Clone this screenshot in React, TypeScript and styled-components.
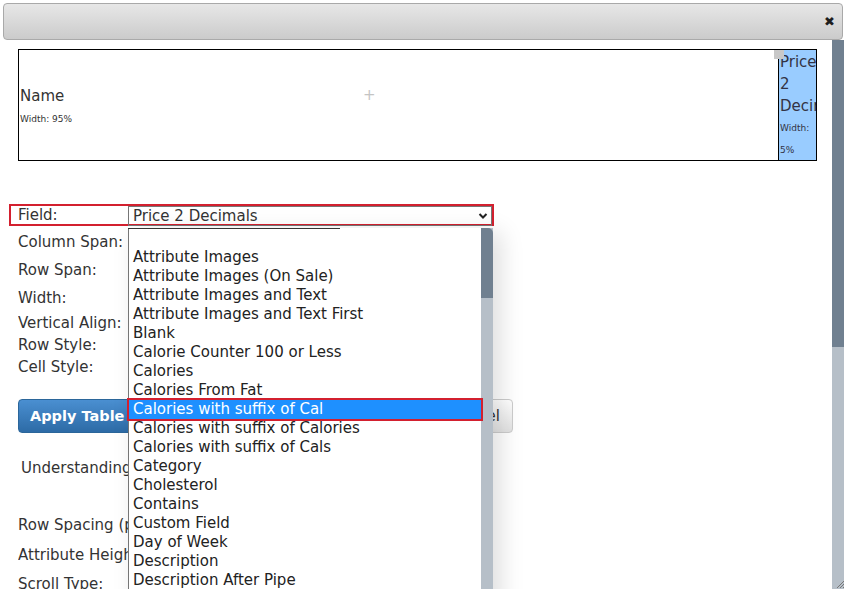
import styled, { createGlobalStyle } from "styled-components";

const GlobalStyle = createGlobalStyle`
  html, body {
    margin: 0;
    height: 100%;
    overflow: hidden;
    background: #fff;
  }
  body {
    font-family: "DejaVu Sans", Verdana, sans-serif;
    color: #333;
  }
  #root {
    height: 100%;
  }
`;

const Modal = styled.div`
  position: relative;
  height: 100%;
  padding: 3px 3px 0 3px;
  box-sizing: border-box;
  display: flex;
  flex-direction: column;
`;

const TitleBar = styled.div`
  height: 37px;
  box-sizing: border-box;
  margin-right: 1px;
  border: 1px solid #a9a9a9;
  border-radius: 4px;
  background: linear-gradient(#e7e7e7, #cbcbcb);
  display: flex;
  align-items: center;
  justify-content: flex-end;
  padding: 0 7px 0 0;
`;

const CloseButton = styled.span`
  font-size: 13px;
  font-weight: bold;
  color: #1e1e1e;
  line-height: 1;
`;

const Body = styled.div`
  flex: 1;
  display: flex;
  min-height: 0;
`;

const Content = styled.div`
  flex: 1;
  padding: 9px 15px 0 15px;
  font-size: 15px;
`;

const PageScrollbar = styled.div`
  width: 12px;
  background: #b6bfc8;
  display: flex;
  flex-direction: column;
`;

const ScrollThumb = styled.div<{ $h: number; $round?: boolean }>`
  height: ${(p) => p.$h}px;
  background: #708090;
  border-top-right-radius: ${(p) => (p.$round ? "5px" : "0")};
`;

const LayoutTable = styled.div`
  position: relative;
  display: flex;
  height: 112px;
  box-sizing: border-box;
  border: 1px solid #000;
`;

const NameCell = styled.div`
  position: relative;
  flex: 1;
  display: flex;
  flex-direction: column;
  justify-content: center;
  padding: 6px 0 0 1px;
  line-height: 23px;
  color: #333;
`;

const CellTitle = styled.div`
  font-size: 15px;
`;

const CellWidth = styled.div`
  font-size: 9px;
`;

const AddMark = styled.span`
  position: absolute;
  left: 344px;
  top: 34px;
  font-size: 15px;
  color: #c4c4c4;
`;

const PriceCell = styled.div`
  width: 38px;
  box-sizing: border-box;
  border-left: 1px solid #000;
  background: #99ccff;
  padding: 1px 0 0 1px;
  overflow: hidden;
  line-height: 22px;
  color: #334;
`;

const ResizeHandle = styled.span`
  position: absolute;
  left: 755px;
  top: 0;
  width: 10px;
  height: 9px;
  background: #c8c8c8;
  z-index: 1;
`;

const Form = styled.div`
  margin-top: 45px;
`;

const FieldRow = styled.div`
  position: relative;
  display: flex;
  align-items: center;
  width: 474px;
  height: 18px;
  margin-left: -7px;
  padding-left: 7px;
  outline: 2px solid #d3202f;
`;

const FormRow = styled.div<{ $gap: number }>`
  display: flex;
  align-items: center;
  height: 19px;
  margin-top: ${(p) => p.$gap}px;
`;

const Label = styled.span`
  width: 110px;
  flex: none;
  white-space: nowrap;
  overflow: hidden;
`;

const SelectWrap = styled.div`
  position: relative;
  flex: 1;
  align-self: flex-start;
`;

const SelectBox = styled.div`
  height: 20px;
  box-sizing: border-box;
  border: 1px solid #767676;
  padding: 0 0 0 4px;
  display: flex;
  align-items: center;
  justify-content: space-between;
  line-height: 18px;
  color: #333;
`;

const Chevron = styled.svg`
  width: 10px;
  height: 8px;
  margin-right: 3px;
`;

const Dropdown = styled.div`
  position: absolute;
  left: 0;
  top: 22px;
  width: 365px;
  height: 380px;
  box-sizing: border-box;
  border-left: 1px solid #767676;
  background: #fff;
  display: flex;
  box-shadow: 8px 4px 22px rgba(0, 0, 0, 0.13);
  z-index: 5;
  &::before {
    content: "";
    position: absolute;
    left: -1px;
    top: 0;
    width: 212px;
    height: 1px;
    background: #333;
  }
`;

const OptionList = styled.div`
  flex: 1;
  padding-top: 1px;
`;

const Option = styled.div<{ $active?: boolean }>`
  height: 19px;
  line-height: 19px;
  padding-left: 4px;
  font-size: 15px;
  white-space: nowrap;
  color: ${(p) => (p.$active ? "#fff" : "#222")};
  background: ${(p) => (p.$active ? "#1e90ff" : "transparent")};
  outline: ${(p) => (p.$active ? "2px solid #d3202f" : "none")};
  position: relative;
`;

const ListScrollbar = styled(PageScrollbar)`
  width: 12px;
`;

const ButtonRow = styled.div`
  display: flex;
  justify-content: space-between;
  width: 495px;
  margin-top: 23px;
`;

const Button = styled.button<{ $primary?: boolean }>`
  height: 34px;
  padding: 0 ${(p) => (p.$primary ? "11px" : "12px")};
  border-radius: 4px;
  font-family: inherit;
  font-size: ${(p) => (p.$primary ? "14.5px" : "15px")};
  font-weight: ${(p) => (p.$primary ? "bold" : "normal")};
  color: ${(p) => (p.$primary ? "#fff" : "#333")};
  border: 1px solid ${(p) => (p.$primary ? "#2b669a" : "#ccc")};
  background: ${(p) =>
    p.$primary
      ? "linear-gradient(#4a8fd1, #2d6ba6)"
      : "linear-gradient(#ffffff, #e2e2e2)"};
`;

const HelpText = styled.div`
  margin: 26px 0 0 3px;
  height: 19px;
  line-height: 19px;
`;

const ResizeGrip = styled.svg`
  position: absolute;
  right: 2px;
  bottom: 0;
  width: 10px;
  height: 10px;
`;

const options = [
  "",
  "Attribute Images",
  "Attribute Images (On Sale)",
  "Attribute Images and Text",
  "Attribute Images and Text First",
  "Blank",
  "Calorie Counter 100 or Less",
  "Calories",
  "Calories From Fat",
  "Calories with suffix of Cal",
  "Calories with suffix of Calories",
  "Calories with suffix of Cals",
  "Category",
  "Cholesterol",
  "Contains",
  "Custom Field",
  "Day of Week",
  "Description",
  "Description After Pipe",
  "Description Before Pipe",
];

const upperRows: [string, number][] = [
  ["Column Span:", 8],
  ["Row Span:", 9],
  ["Width:", 9],
  ["Vertical Align:", 6],
  ["Row Style:", 3],
  ["Cell Style:", 3],
];

const lowerRows: [string, number][] = [
  ["Row Spacing (px):", 37],
  ["Attribute Height:", 11],
  ["Scroll Type:", 10],
];

function App() {
  return (
    <>
      <GlobalStyle />
      <Modal>
        <TitleBar>
          <CloseButton>✖</CloseButton>
        </TitleBar>
        <Body>
          <Content>
            <LayoutTable>
              <NameCell>
                <CellTitle>Name</CellTitle>
                <CellWidth>Width: 95%</CellWidth>
                <AddMark>+</AddMark>
              </NameCell>
              <PriceCell>
                <CellTitle>Price 2 Decimals</CellTitle>
                <CellWidth>Width: 5%</CellWidth>
              </PriceCell>
              <ResizeHandle />
            </LayoutTable>

            <Form>
              <FieldRow>
                <Label>Field:</Label>
                <SelectWrap>
                  <SelectBox>
                    Price 2 Decimals
                    <Chevron viewBox="0 0 10 8">
                      <path d="M1.5 2 L5 5.5 L8.5 2" fill="none" stroke="#222" strokeWidth="2" />
                    </Chevron>
                  </SelectBox>
                  <Dropdown>
                    <OptionList>
                      {options.map((o, i) => (
                        <Option key={i} $active={o === "Calories with suffix of Cal"}>
                          {o || "\u00a0"}
                        </Option>
                      ))}
                    </OptionList>
                    <ListScrollbar>
                      <ScrollThumb $h={70} $round />
                    </ListScrollbar>
                  </Dropdown>
                </SelectWrap>
              </FieldRow>
              {upperRows.map(([label, gap]) => (
                <FormRow key={label} $gap={gap}>
                  <Label>{label}</Label>
                </FormRow>
              ))}
            </Form>

            <ButtonRow>
              <Button $primary>Apply Table Changes</Button>
              <Button>Cancel</Button>
            </ButtonRow>

            <HelpText>Understanding Table Layouts</HelpText>

            {lowerRows.map(([label, gap]) => (
              <FormRow key={label} $gap={gap}>
                <Label>{label}</Label>
              </FormRow>
            ))}
          </Content>
          <PageScrollbar>
            <ScrollThumb $h={307} />
          </PageScrollbar>
        </Body>
        <ResizeGrip viewBox="0 0 10 10">
          <path d="M9 2 L2 9 M9 5 L5 9 M9 8 L8 9" stroke="#777" strokeWidth="1" />
        </ResizeGrip>
      </Modal>
    </>
  );
}

export default App;
